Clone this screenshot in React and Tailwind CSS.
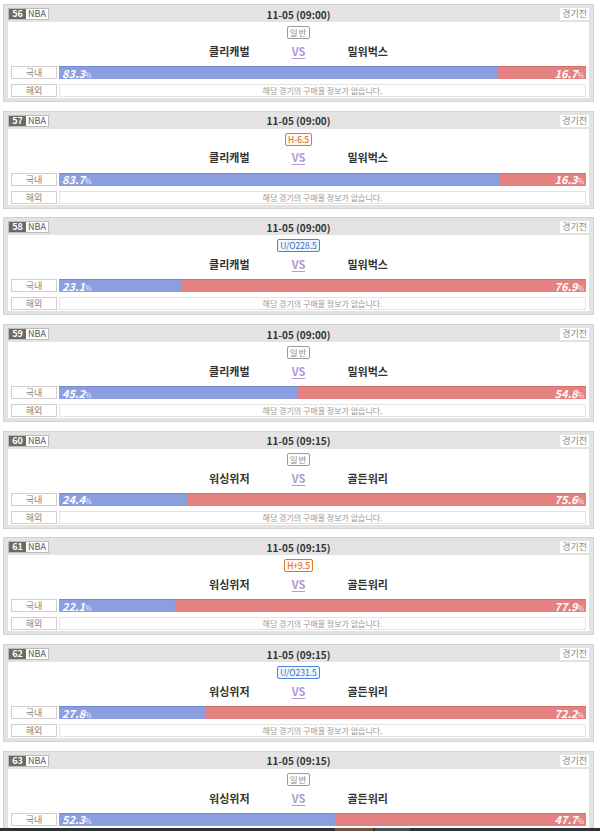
import React from "react";

const games = [
  { no: 56, time: "11-05 (09:00)", type: "normal", label: "일반", home: "클리캐벌", away: "밀워벅스", h: "83.3", a: "16.7" },
  { no: 57, time: "11-05 (09:00)", type: "handicap", label: "H-6.5", home: "클리캐벌", away: "밀워벅스", h: "83.7", a: "16.3" },
  { no: 58, time: "11-05 (09:00)", type: "overunder", label: "U/O228.5", home: "클리캐벌", away: "밀워벅스", h: "23.1", a: "76.9" },
  { no: 59, time: "11-05 (09:00)", type: "normal", label: "일반", home: "클리캐벌", away: "밀워벅스", h: "45.2", a: "54.8" },
  { no: 60, time: "11-05 (09:15)", type: "normal", label: "일반", home: "워싱위저", away: "골든워리", h: "24.4", a: "75.6" },
  { no: 61, time: "11-05 (09:15)", type: "handicap", label: "H+9.5", home: "워싱위저", away: "골든워리", h: "22.1", a: "77.9" },
  { no: 62, time: "11-05 (09:15)", type: "overunder", label: "U/O231.5", home: "워싱위저", away: "골든워리", h: "27.8", a: "72.2" },
  { no: 63, time: "11-05 (09:15)", type: "normal", label: "일반", home: "워싱위저", away: "골든워리", h: "52.3", a: "47.7" },
];

const labelStyles = {
  normal: "border-[#9a9a9a] text-[#888] bg-white tracking-[1px]",
  handicap: "border-[#e0782a] text-[#d2601a] bg-[#fff8f2]",
  overunder: "border-[#4a86d8] text-[#3a6fb8] bg-[#f0f6ff]",
};

const Pct = ({ value, right }) => (
  <span
    className={`text-white font-bold italic text-[11px] leading-none ${right ? "pr-[2px]" : "pl-[3px]"}`}
  >
    {value}
    <span className="text-[7px] not-italic font-normal text-[#eef]">%</span>
  </span>
);

const GameCard = ({ g }) => (
  <div className="border border-[#d2d2d2] bg-[#e3e3e3] px-[4px] pb-[3px]">
    {/* header */}
    <div className="flex items-center h-[17px] pt-[1px]">
      <div className="flex-1 flex">
        <div className="flex items-stretch h-[12px] border border-[#bdbdbd]">
          <span className="bg-[#6a6a6a] text-white font-bold text-[9px] leading-[10px] px-[2px] w-[17px] text-center">
            {g.no}
          </span>
          <span className="bg-white text-[#555] text-[9px] leading-[10px] px-[2px]">NBA</span>
        </div>
      </div>
      <div className="text-[10px] font-bold text-[#333]">{g.time}</div>
      <div className="flex-1 flex justify-end">
        <span className="bg-white text-[#888] text-[9px] leading-[12px] h-[12px] px-[2px]">경기전</span>
      </div>
    </div>

    {/* body */}
    <div className="bg-white px-[3px] pt-[4px] pb-[1px]">
      <div className="flex justify-center h-[13px]">
        <span
          className={`border rounded-[2px] text-[8.5px] leading-[11px] px-[2px] ${labelStyles[g.type]}`}
        >
          {g.label}
        </span>
      </div>
      <div className="flex items-center h-[24px] text-[11px] font-bold text-[#333]">
        <div className="flex-1 text-right">{g.home}</div>
        <div className="w-[98px] text-center">
          <span className="text-[#b09ad8] underline underline-offset-2">VS</span>
        </div>
        <div className="flex-1 text-left">{g.away}</div>
      </div>
      <div className="mt-[3px] flex gap-[2px] h-[13px]">
        <div className="w-[46px] border border-[#cfcfcf] bg-white text-[9px] leading-[11px] text-[#888] text-center">
          국내
        </div>
        <div className="flex-1 flex">
          <div
            className="bg-[#8b9ee0] border-t border-[#7487d2] flex items-center"
            style={{ width: `${g.h}%` }}
          >
            <Pct value={g.h} />
          </div>
          <div
            className="bg-[#e38280] border-t border-[#d46f6d] flex items-center justify-end"
            style={{ width: `${g.a}%` }}
          >
            <Pct value={g.a} right />
          </div>
        </div>
      </div>
      <div className="mt-[5px] flex gap-[2px] h-[13px]">
        <div className="w-[46px] border border-[#cfcfcf] bg-white text-[9px] leading-[11px] text-[#888] text-center">
          해외
        </div>
        <div className="flex-1 border border-[#e2e2e2] bg-white text-[8px] leading-[11px] text-[#999] text-center">
          해당 경기의 구매율 정보가 없습니다.
        </div>
      </div>
    </div>
  </div>
);

export default function App() {
  return (
    <div
      className="min-h-screen bg-white pl-[3px] pr-[6px] pt-[4px] flex flex-col gap-[8.7px]"
      style={{ fontFamily: '"Noto Sans CJK KR", "Noto Sans", sans-serif' }}
    >
      {games.map((g) => (
        <GameCard key={g.no} g={g} />
      ))}
      <div className="fixed bottom-0 left-0 right-0 h-[3px] bg-[#2f3235] flex">
        <div className="ml-[335px] w-[38px] bg-[#6e5540]" />
        <div className="ml-[2px] w-[35px] bg-[#4a4d50]" />
      </div>
    </div>
  );
}
